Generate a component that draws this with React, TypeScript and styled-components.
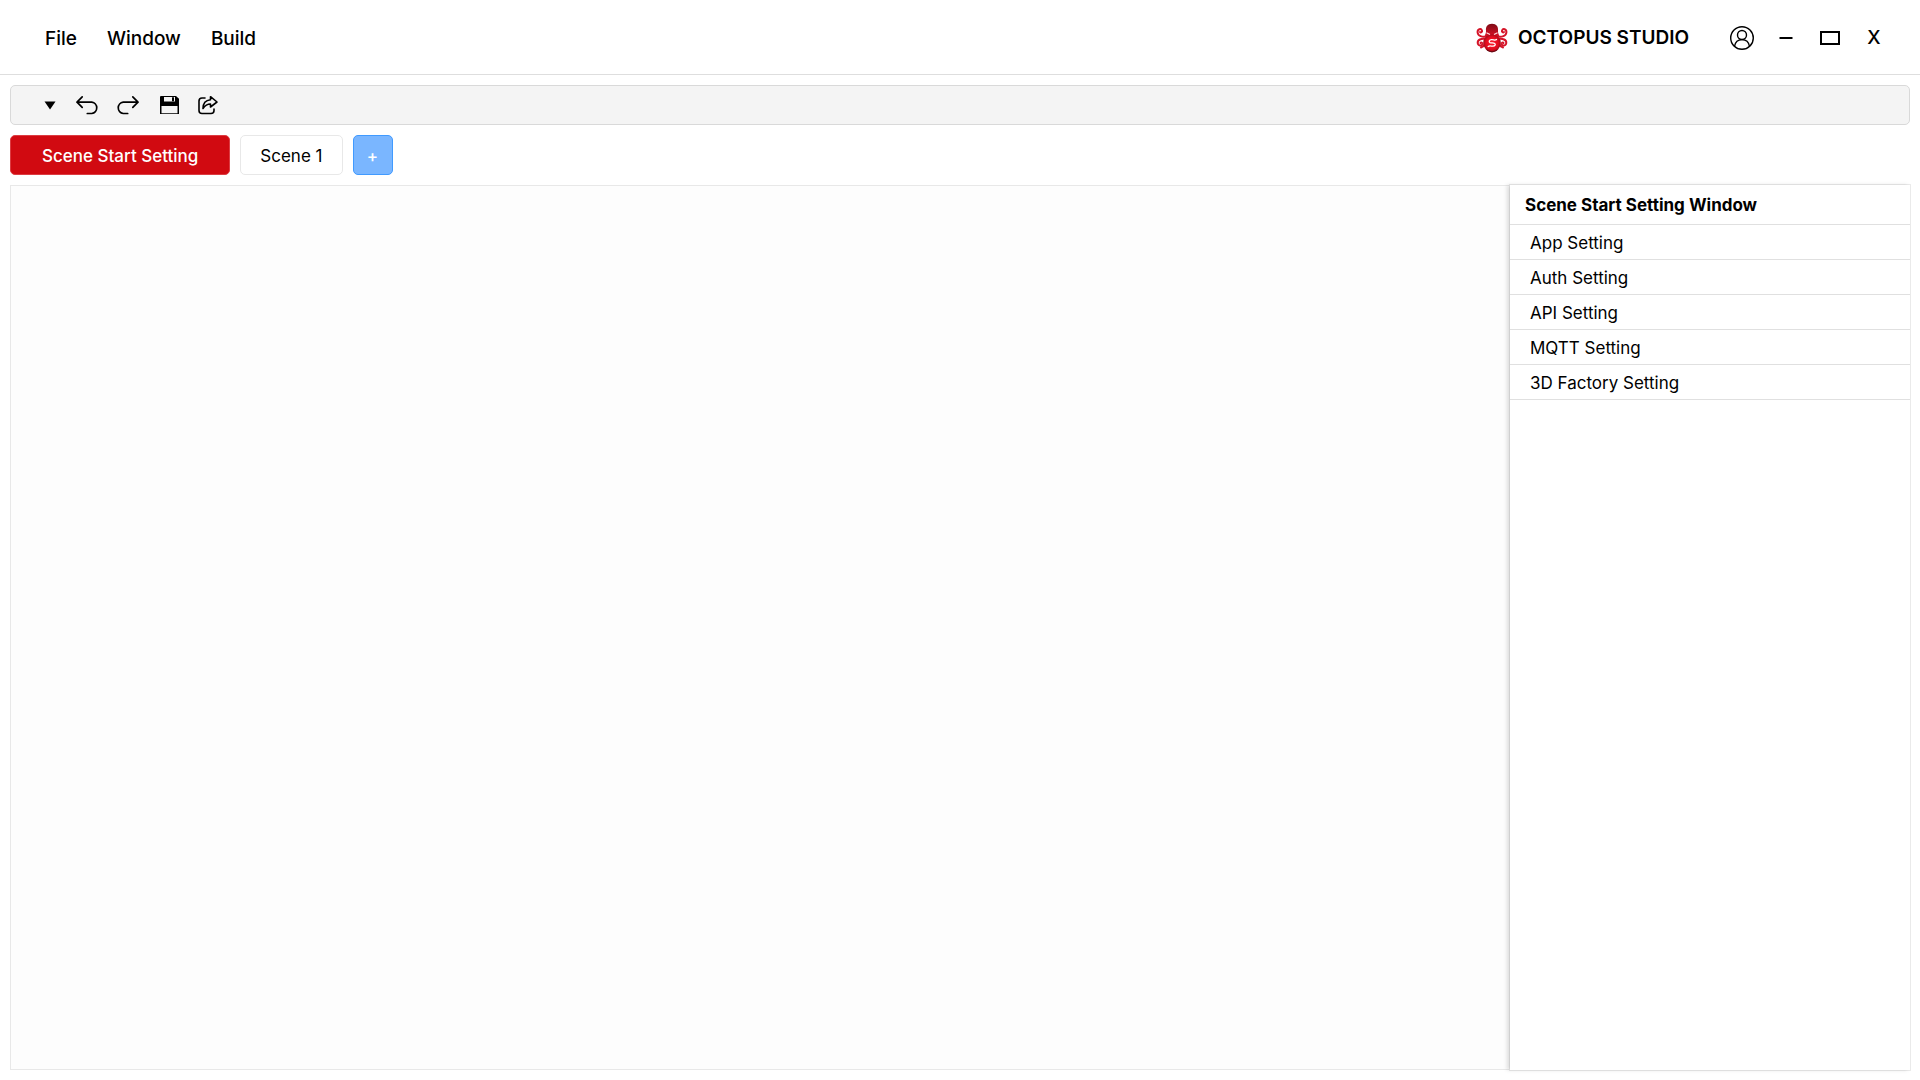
import React, { useState } from 'react';
import styled, { createGlobalStyle } from 'styled-components';

const GlobalStyle = createGlobalStyle`
  *, *::before, *::after { box-sizing: border-box; }
  body {
    margin: 0;
    background: #fff;
    color: #000;
    font-family: Inter, "Liberation Sans", sans-serif;
    font-size: 17px;
    line-height: 24px;
  }
  button {
    font: inherit;
    color: inherit;
    background: none;
    border: 0;
    padding: 0;
    cursor: pointer;
  }
`;

const Page = styled.div`
  display: flex;
  flex-direction: column;
  min-height: 100vh;
`;

const Header = styled.header`
  display: flex;
  align-items: center;
  justify-content: space-between;
  height: 75px;
  padding: 2px 34px 0 45px;
  border-bottom: 1px solid #dedede;
`;

const Menu = styled.nav`
  display: flex;
  gap: 30px;
`;

const MenuButton = styled.button`
  padding-top: 2px;
  font-size: 19px;
  font-weight: 500;
`;

const HeaderSide = styled.div`
  display: flex;
  align-items: center;
  gap: 41px;
`;

const Brand = styled.div`
  display: flex;
  align-items: center;
  gap: 10px;
  font-size: 19px;
  font-weight: 600;
`;

const WindowControls = styled.div`
  display: flex;
  align-items: center;
  gap: 20px;
`;

const IconButton = styled.button<{ $narrow?: boolean }>`
  display: flex;
  align-items: center;
  justify-content: center;
  width: ${p => (p.$narrow ? 16 : 24)}px;
  height: 24px;
`;

const CloseButton = styled(IconButton)`
  font-size: 19px;
  font-weight: 500;
`;

const Body = styled.main`
  display: flex;
  flex: 1;
  flex-direction: column;
  gap: 10px;
  padding: 10px;
`;

const Toolbar = styled.div`
  display: flex;
  align-items: center;
  gap: 17px;
  height: 40px;
  padding: 0 31px;
  background: #f4f4f4;
  border: 1px solid #d9d9d9;
  border-radius: 5px;
`;

const Tabs = styled.div`
  display: flex;
  gap: 10px;
`;

const Tab = styled.button<{ $active?: boolean }>`
  height: 40px;
  padding: 2px ${p => (p.$active ? 31 : 19)}px 0;
  font-weight: ${p => (p.$active ? 500 : 400)};
  color: ${p => (p.$active ? '#fff' : '#000')};
  background: ${p => (p.$active ? '#d10a11' : '#fff')};
  border: 1px solid ${p => (p.$active ? '#dd3c42' : '#e8e8e8')};
  border-radius: 5px;
`;

const AddTab = styled.button`
  width: 40px;
  height: 40px;
  padding-top: 2px;
  font-weight: 500;
  color: #fff;
  background: #7ab6ff;
  border: 1px solid #409aff;
  border-radius: 5px;
`;

const Workspace = styled.div`
  display: flex;
  flex: 1;
`;

const Canvas = styled.section`
  flex: 1;
  background: #fdfdfd;
  border: 1px solid #e8e8e8;
  border-right: 0;
`;

const Panel = styled.aside`
  width: 400px;
  background: #fff;
  box-shadow: -3px 0 4px rgba(0, 0, 0, 0.13), 0 0 0 1px #ebebeb;
`;

const PanelTitle = styled.h2`
  margin: 0;
  padding: 8px 15px 7px;
  font-size: 17px;
  font-weight: 700;
  border-bottom: 1px solid #e0e0e0;
`;

const SettingList = styled.ul`
  margin: 0;
  padding: 0;
  list-style: none;
`;

const SettingButton = styled.button`
  display: block;
  width: 100%;
  height: 35px;
  padding: 2px 20px 0;
  text-align: left;
  border-bottom: 1px solid #e0e0e0;
`;

const OctopusLogo = () => (
  <svg width="32" height="30" viewBox="0 0 32 30" aria-hidden="true">
    <defs>
      <radialGradient id="octopusSkin" cx="50%" cy="50%" r="55%">
        <stop offset="0" stopColor="#ff1c2c" />
        <stop offset="0.65" stopColor="#e20c1e" />
        <stop offset="1" stopColor="#8b0c18" />
      </radialGradient>
      <linearGradient id="octopusHead" x1="0" y1="0" x2="0" y2="1">
        <stop offset="0" stopColor="#7d0b16" />
        <stop offset="1" stopColor="#e01226" />
      </linearGradient>
    </defs>
    <g fill="none" stroke="#d51428" strokeWidth="2" strokeLinecap="round">
      <path d="M11 13.500C6 14.500 2 13 1.600 9.500C1.300 6 5 5 6 7.500C6.500 9 4.800 10 4 9" />
      <path d="M21 13.500c5 1 9-.5 9.400-4C30.700 6 27 5 26 7.500c-.5 1.500 1.200 2.500 2 1.500" />
      <path d="M10 16C5 15 1.500 17 1.700 20c.3 3 4.300 3.500 4.800 1 .2-1.500-1.500-2-2-1" />
      <path d="M22 16c5-1 8.500 1 8.300 4-.3 3-4.300 3.500-4.800 1-.2-1.500 1.500-2 2-1" />
      <path d="M9 21c-1 2-2 3-4 3.500M23 21c1 2 2 3 4 3.500" />
    </g>
    <path d="M16 .8c4.500 0 6.500 3 6 6.800-.3 2.400.8 4.400 2 6.400H8c1.200-2 2.300-4 2-6.400C9.500 3.800 11.500.8 16 .8Z" fill="url(#octopusHead)" />
    <circle cx="16" cy="20" r="8.800" fill="url(#octopusSkin)" />
    <path d="M10.500 9.800 14 11.600M21.500 9.800 18 11.600" stroke="#ffd9dd" strokeWidth="1.100" />
    <path d="M20.500 16.500c-1.500 1.500-3 0-5 .2-2.200.2-3 2-1.500 2.900 1.300.7 3.300 0 4.700.9 1.200.9.300 2.600-1.700 2.700-1.800.1-3.300-1-4.800.3" fill="none" stroke="#fff" strokeWidth="1.300" strokeLinecap="round" />
    <path d="M11 27c3 2 7 2 10 0" fill="none" stroke="#6c0a14" strokeWidth="1.400" />
  </svg>
);

const UserIcon = () => (
  <svg width="24" height="24" viewBox="0 0 24 24" fill="none" stroke="#000" strokeWidth="1.400" aria-hidden="true">
    <circle cx="12" cy="12" r="11.300" />
    <circle cx="12" cy="9" r="4.500" />
    <path d="M4.500 20.300C5.200 16.300 8 13.600 12 13.600s6.800 2.700 7.500 6.700" />
  </svg>
);

const MinimizeIcon = () => (
  <svg width="14" height="24" viewBox="0 0 14 24" aria-hidden="true">
    <path d="M.5 12h13" stroke="#000" strokeWidth="2" />
  </svg>
);

const MaximizeIcon = () => (
  <svg width="20" height="14" viewBox="0 0 20 14" aria-hidden="true">
    <rect x="1" y="1" width="18" height="12" fill="none" stroke="#000" strokeWidth="2" />
  </svg>
);

const CaretIcon = () => (
  <svg width="12" height="10" viewBox="0 0 12 10" aria-hidden="true">
    <path d="M.5 1.500h11L6 9.500Z" />
  </svg>
);

const UndoIcon = () => (
  <svg width="24" height="24" viewBox="0 0 24 24" fill="none" stroke="#000" strokeWidth="1.700" strokeLinecap="round" strokeLinejoin="round" aria-hidden="true">
    <path d="M7.200 3.800 2 9.200l5.200 5.200M2 9.200h14.800a5.700 5.700 0 0 1 0 11.300h-4.500" />
  </svg>
);

const RedoIcon = () => (
  <svg width="24" height="24" viewBox="0 0 24 24" fill="none" stroke="#000" strokeWidth="1.700" strokeLinecap="round" strokeLinejoin="round" aria-hidden="true">
    <path d="M16.800 3.800 22 9.200l-5.200 5.200M22 9.200H7.200a5.700 5.700 0 0 0 0 11.300h4.500" />
  </svg>
);

const SaveIcon = () => (
  <svg width="24" height="24" viewBox="0 0 24 24" aria-hidden="true">
    <path d="M3.500 3h15.500L22 5.800V21H3V3.500Z" />
    <path d="M7 4h11v4.500H7ZM4.500 13h16v7.200h-16Z" fill="#f4f4f4" />
    <path d="M15 4.300h2v4h-2Z" />
  </svg>
);

const ShareIcon = () => (
  <svg width="24" height="24" viewBox="2 0 24 24" fill="none" stroke="#000" strokeWidth="1.600" strokeLinecap="round" strokeLinejoin="round" aria-hidden="true">
    <path d="M9 5H6a3 3 0 0 0-3 3v9.500a3 3 0 0 0 3 3h9a3 3 0 0 0 3-3V16" />
    <path d="M14.500 3.700 21 9l-6.500 5v-3c-3.500 0-5.500 1.500-7.500 4.500 0-5 2.500-8.300 7.500-8.800Z" />
  </svg>
);

const settings = ['App Setting', 'Auth Setting', 'API Setting', 'MQTT Setting', '3D Factory Setting'];

export default function App() {
  const [active, setActive] = useState(0);
  return (
    <Page>
      <GlobalStyle />
      <Header>
        <Menu>
          <MenuButton>File</MenuButton>
          <MenuButton>Window</MenuButton>
          <MenuButton>Build</MenuButton>
        </Menu>
        <HeaderSide>
          <Brand>
            <OctopusLogo />
            OCTOPUS STUDIO
          </Brand>
          <WindowControls>
            <IconButton aria-label="Account"><UserIcon /></IconButton>
            <IconButton aria-label="Minimize"><MinimizeIcon /></IconButton>
            <IconButton aria-label="Maximize"><MaximizeIcon /></IconButton>
            <CloseButton>X</CloseButton>
          </WindowControls>
        </HeaderSide>
      </Header>
      <Body>
        <Toolbar>
          <IconButton $narrow aria-label="More tools"><CaretIcon /></IconButton>
          <IconButton aria-label="Undo"><UndoIcon /></IconButton>
          <IconButton aria-label="Redo"><RedoIcon /></IconButton>
          <IconButton aria-label="Save"><SaveIcon /></IconButton>
          <IconButton aria-label="Share"><ShareIcon /></IconButton>
        </Toolbar>
        <Tabs>
          <Tab $active={active === 0} onClick={() => setActive(0)}>Scene Start Setting</Tab>
          <Tab $active={active === 1} onClick={() => setActive(1)}>Scene 1</Tab>
          <AddTab>+</AddTab>
        </Tabs>
        <Workspace>
          <Canvas />
          <Panel>
            <PanelTitle>Scene Start Setting Window</PanelTitle>
            <SettingList>
              {settings.map(name => (
                <li key={name}><SettingButton>{name}</SettingButton></li>
              ))}
            </SettingList>
          </Panel>
        </Workspace>
      </Body>
    </Page>
  );
}
